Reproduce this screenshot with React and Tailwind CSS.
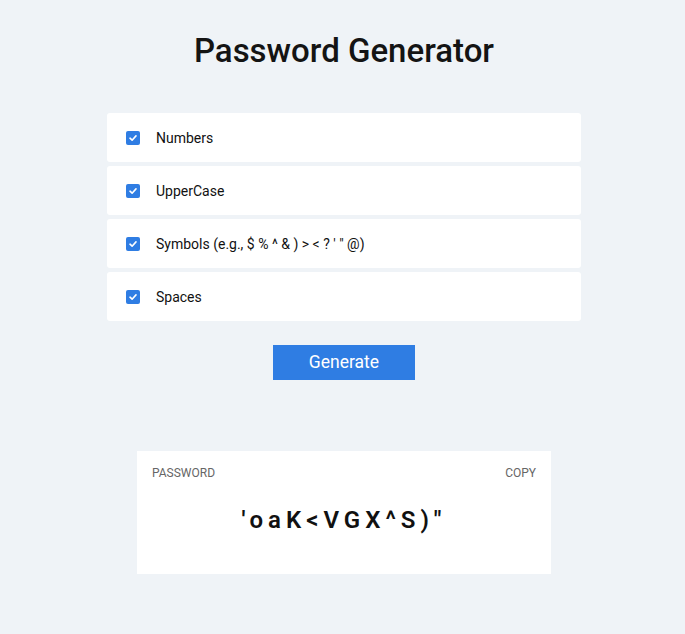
/**
 * Password generator screen: option checkboxes, generate button, result card.
 */

const OPTIONS = [
  { id: "numbers", label: "Numbers" },
  { id: "upper", label: "UpperCase" },
  { id: "symbols", label: "Symbols (e.g., $ % ^ & ) > < ? ' \" @)" },
  { id: "spaces", label: "Spaces" },
];

function Check() {
  return (
    <span className="w-[14px] h-[14px] rounded-[2px] bg-[#2f7de3] flex items-center justify-center flex-shrink-0">
      <svg width="10" height="10" viewBox="0 0 10 10" fill="none">
        <path d="M2 5.2 L4.1 7.2 L8 2.9" stroke="white" strokeWidth="1.6" strokeLinecap="round" strokeLinejoin="round" />
      </svg>
    </span>
  );
}

export default function App() {
  return (
    <div
      className="min-h-[634px] bg-[#eff3f7] flex flex-col items-center pl-[3px] text-[#111]"
      style={{ fontFamily: "Roboto, 'Liberation Sans', sans-serif" }}
    >
      <h1 className="mt-[32px] text-[33px] leading-[38px] font-medium text-[#141414]">Password Generator</h1>

      {/* Options */}
      <div className="mt-[43px] w-[474px] flex flex-col gap-[4px]">
        {OPTIONS.map((o) => (
          <label key={o.id} className="h-[49px] bg-white rounded-[3px] flex items-center pl-[19px] gap-[16px]">
            <Check />
            <span className="text-[14px] text-[#111] pt-[2px]">{o.label}</span>
          </label>
        ))}
      </div>

      <button className="mt-[24px] w-[142px] h-[35px] bg-[#2f7de3] text-white text-[17.5px] leading-none">
        Generate
      </button>

      {/* Result */}
      <div className="mt-[71px] w-[414px] h-[123px] bg-white pt-[14px] px-[15px]">
        <div className="flex justify-between text-[12px] leading-[16px] text-[#666]">
          <span>PASSWORD</span>
          <span>COPY</span>
        </div>
        <div className="mt-[23px] text-center text-[24px] leading-[32px] font-semibold tracking-[5px] text-[#111]">
          'oaK&lt;VGX^S)"
        </div>
      </div>
    </div>
  );
}
